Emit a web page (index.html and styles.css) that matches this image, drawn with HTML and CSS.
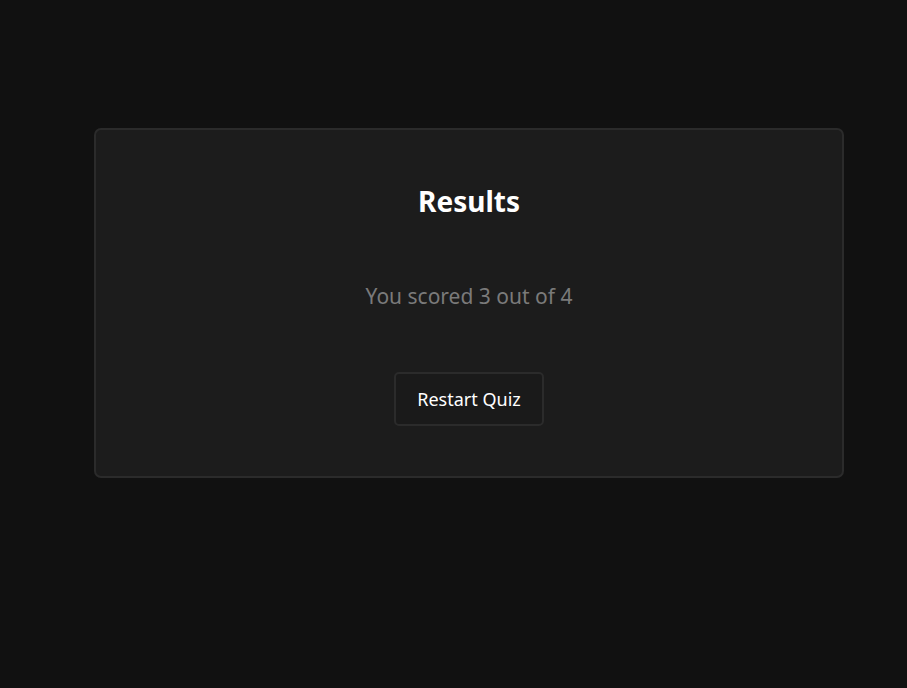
FILE: index.html
```html
<!DOCTYPE html>
<html>
<head>
<meta charset="utf-8">
<link rel="stylesheet" href="styles.css">
</head>
<body>
<main class="page">
  <section class="card">
    <h1 class="title">Results</h1>
    <p class="score">You scored 3 out of 4</p>
    <button class="restart">Restart Quiz</button>
  </section>
</main>
</body>
</html>
```
FILE: styles.css
```css
html, body {
  margin: 0;
  padding: 0;
  background: #111111;
  height: 100%;
}
body {
  font-family: "Noto Sans", "Open Sans", sans-serif;
  color: #ffffff;
}
.page {
  padding: 128px 0 0 94px;
}
.card {
  box-sizing: border-box;
  width: 750px;
  height: 350px;
  background: #1c1c1c;
  border: 2px solid #2b2b2b;
  border-radius: 7px;
  display: flex;
  flex-direction: column;
  align-items: center;
  padding-top: 51px;
}
.title {
  margin: 0;
  font-size: 28px;
  font-weight: 700;
  line-height: 40px;
  color: #ffffff;
}
.score {
  margin: 61px 0 0;
  font-size: 21px;
  line-height: 28px;
  color: #7a7a7a;
}
.restart {
  margin-top: 62px;
  width: 150px;
  height: 54px;
  background: #1a1a1a;
  border: 2px solid #2b2b2b;
  border-radius: 5px;
  color: #ffffff;
  font-family: "Noto Sans", "Open Sans", sans-serif;
  font-size: 18px;
}
```
